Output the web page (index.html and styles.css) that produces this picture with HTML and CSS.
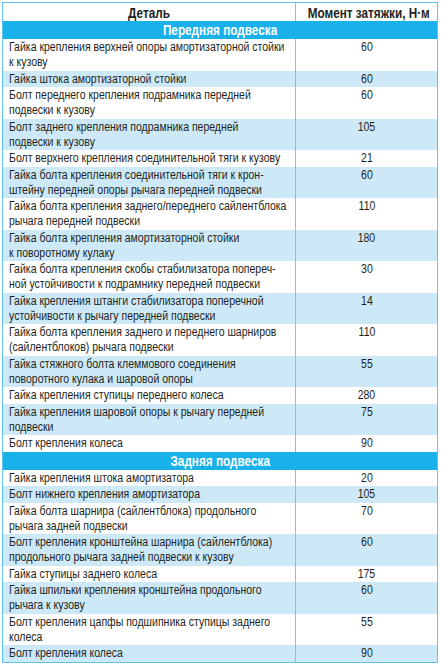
FILE: index.html
```html
<!DOCTYPE html>
<html lang="ru">
<head>
<meta charset="utf-8">
<title>Моменты затяжки</title>
<link rel="stylesheet" href="styles.css">
</head>
<body>
<table class="torque">
  <colgroup><col class="c-part"><col class="c-val"></colgroup>
  <thead>
    <tr class="head"><th><span class="t">Деталь</span></th><th><span class="t">Момент затяжки, Н·м</span></th></tr>
  </thead>
  <tbody>
    <tr class="section"><td colspan="2"><span class="t">Передняя подвеска</span></td></tr>
    <tr><td><span class="t">Гайка крепления верхней опоры амортизаторной стойки<br>к кузову</span></td><td><span class="t">60</span></td></tr>
    <tr class="alt"><td><span class="t">Гайка штока амортизаторной стойки</span></td><td><span class="t">60</span></td></tr>
    <tr><td><span class="t">Болт переднего крепления подрамника передней<br>подвески к кузову</span></td><td><span class="t">60</span></td></tr>
    <tr class="alt"><td><span class="t">Болт заднего крепления подрамника передней<br>подвески к кузову</span></td><td><span class="t">105</span></td></tr>
    <tr><td><span class="t">Болт верхнего крепления соединительной тяги к кузову</span></td><td><span class="t">21</span></td></tr>
    <tr class="alt"><td><span class="t">Гайка болта крепления соединительной тяги к крон-<br>штейну передней опоры рычага передней подвески</span></td><td><span class="t">60</span></td></tr>
    <tr><td><span class="t">Гайка болта крепления заднего/переднего сайлентблока<br>рычага передней подвески</span></td><td><span class="t">110</span></td></tr>
    <tr class="alt"><td><span class="t">Гайка болта крепления амортизаторной стойки<br>к поворотному кулаку</span></td><td><span class="t">180</span></td></tr>
    <tr><td><span class="t">Гайка болта крепления скобы стабилизатора попереч-<br>ной устойчивости к подрамнику передней подвески</span></td><td><span class="t">30</span></td></tr>
    <tr class="alt"><td><span class="t">Гайка крепления штанги стабилизатора поперечной<br>устойчивости к рычагу передней подвески</span></td><td><span class="t">14</span></td></tr>
    <tr><td><span class="t">Гайка болта крепления заднего и переднего шарниров<br>(сайлентблоков) рычага подвески</span></td><td><span class="t">110</span></td></tr>
    <tr class="alt"><td><span class="t">Гайка стяжного болта клеммового соединения<br>поворотного кулака и шаровой опоры</span></td><td><span class="t">55</span></td></tr>
    <tr><td><span class="t">Гайка крепления ступицы переднего колеса</span></td><td><span class="t">280</span></td></tr>
    <tr class="alt"><td><span class="t">Гайка крепления шаровой опоры к рычагу передней<br>подвески</span></td><td><span class="t">75</span></td></tr>
    <tr><td><span class="t">Болт крепления колеса</span></td><td><span class="t">90</span></td></tr>
    <tr class="section"><td colspan="2"><span class="t">Задняя подвеска</span></td></tr>
    <tr><td><span class="t">Гайка крепления штока амортизатора</span></td><td><span class="t">20</span></td></tr>
    <tr class="alt"><td><span class="t">Болт нижнего крепления амортизатора</span></td><td><span class="t">105</span></td></tr>
    <tr><td><span class="t">Гайка болта шарнира (сайлентблока) продольного<br>рычага задней подвески</span></td><td><span class="t">70</span></td></tr>
    <tr class="alt"><td><span class="t">Болт крепления кронштейна шарнира (сайлентблока)<br>продольного рычага задней подвески к кузову</span></td><td><span class="t">60</span></td></tr>
    <tr><td><span class="t">Гайка ступицы заднего колеса</span></td><td><span class="t">175</span></td></tr>
    <tr class="alt"><td><span class="t">Гайка шпильки крепления кронштейна продольного<br>рычага к кузову</span></td><td><span class="t">60</span></td></tr>
    <tr><td><span class="t">Болт крепления цапфы подшипника ступицы заднего<br>колеса</span></td><td><span class="t">55</span></td></tr>
    <tr class="alt"><td><span class="t">Болт крепления колеса</span></td><td><span class="t">90</span></td></tr>
  </tbody>
</table>
</body>
</html>
```

FILE: styles.css
```css
html, body {
  background: #ffffff;
}
body {
  margin: 2px 0 0 2px;
  font-family: "Liberation Sans", Arial, sans-serif;
  color: #231f20;
}
.torque {
  border-collapse: collapse;
  width: 435px;
  table-layout: fixed;
  border: 1px solid #62c4ec;
  font-size: 12.5px;
}
.c-part { width: 293px; }
.c-val { width: 142px; }
.torque th,
.torque td {
  padding: 1px 0 0.5px 6px;
  line-height: 15px;
  vertical-align: top;
  text-align: left;
  white-space: nowrap;
  overflow: visible;
}
.t {
  display: inline-block;
  transform: scaleX(0.84);
  transform-origin: 0 0;
}
.torque td + td,
.torque th + th {
  text-align: center;
  padding-left: 0;
  border-left: 1px solid #6fc9ee;
}
.torque td + td .t,
.torque th + th .t,
.head .t,
.section .t {
  transform-origin: 50% 0;
}
.head th {
  font-weight: bold;
  text-align: center;
  height: 17px;
  padding: 1px 0 0;
  vertical-align: middle;
  font-size: 14px;
  line-height: 16px;
}
.section td {
  background: #19b1e9;
  color: #ffffff;
  font-weight: bold;
  text-align: center;
  height: 18px;
  padding: 0;
  vertical-align: middle;
  font-size: 14px;
  line-height: 16px;
}
.alt td {
  background: #cde9f8;
}
```
